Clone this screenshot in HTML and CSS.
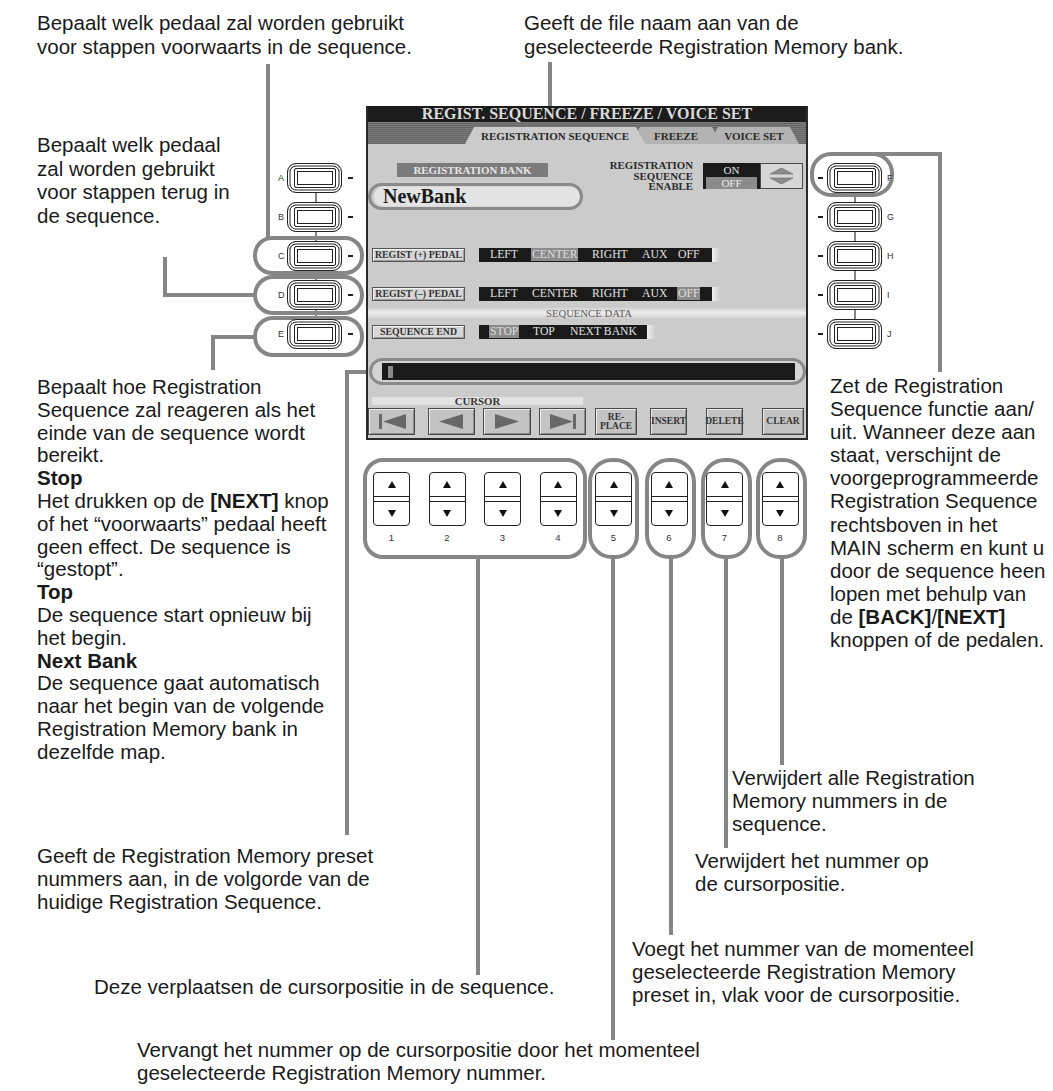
FILE: index.html
```html
<!DOCTYPE html>
<html lang="nl">
<head>
<meta charset="utf-8">
<title>Regist. Sequence / Freeze / Voice Set</title>
<link rel="stylesheet" href="styles.css">
</head>
<body>
<div class="canvas">
  <svg class="leaders" width="1053" height="1091" viewBox="0 0 1053 1091">
    <g class="conn">
      <line x1="316" y1="178" x2="316" y2="334"/>
      <line x1="855" y1="178" x2="855" y2="334"/>
    </g>
    <g class="hl">
      <path d="M268 64 V240"/>
      <path d="M550 62 V184"/>
      <rect x="255" y="238" width="107" height="35" rx="17"/>
      <rect x="255" y="277" width="107" height="36" rx="18"/>
      <rect x="255" y="318" width="107" height="37" rx="18"/>
      <path d="M165 257 V295 H255"/>
      <path d="M213 370 V337 H255"/>
      <path d="M347 835 V372 H369"/>
      <rect x="812" y="154" width="80" height="41" rx="19"/>
      <path d="M870 154 H940 V372"/>
      <rect x="365" y="460" width="220" height="97" rx="18"/>
      <rect x="590" y="460" width="47" height="97" rx="22"/>
      <rect x="647" y="460" width="47" height="97" rx="22"/>
      <rect x="703" y="460" width="47" height="97" rx="22"/>
      <rect x="758" y="460" width="47" height="97" rx="22"/>
      <path d="M478 557 V975"/>
      <path d="M613 557 V1040"/>
      <path d="M671 557 V935"/>
      <path d="M726 557 V848"/>
      <path d="M782 557 V765"/>
    </g>
  </svg>

  <p class="note n1">Bepaalt welk pedaal zal worden gebruikt<br>voor stappen voorwaarts in de sequence.</p>
  <p class="note n2">Geeft de file naam aan van de<br>geselecteerde Registration Memory bank.</p>
  <p class="note n3">Bepaalt welk pedaal<br>zal worden gebruikt<br>voor stappen terug in<br>de sequence.</p>
  <p class="note n4">Bepaalt hoe Registration<br>Sequence zal reageren als het<br>einde van de sequence wordt<br>bereikt.<br><b>Stop</b><br>Het drukken op de <b>[NEXT]</b> knop<br>of het “voorwaarts” pedaal heeft<br>geen effect. De sequence is<br>“gestopt”.<br><b>Top</b><br>De sequence start opnieuw bij<br>het begin.<br><b>Next Bank</b><br>De sequence gaat automatisch<br>naar het begin van de volgende<br>Registration Memory bank in<br>dezelfde map.</p>
  <p class="note n5">Zet de Registration<br>Sequence functie aan/<br>uit. Wanneer deze aan<br>staat, verschijnt de<br>voorgeprogrammeerde<br>Registration Sequence<br>rechtsboven in het<br>MAIN scherm en kunt u<br>door de sequence heen<br>lopen met behulp van<br>de <b>[BACK]</b>/<b>[NEXT]</b><br>knoppen of de pedalen.</p>
  <p class="note n6">Verwijdert alle Registration<br>Memory nummers in de<br>sequence.</p>
  <p class="note n7">Verwijdert het nummer op<br>de cursorpositie.</p>
  <p class="note n8">Geeft de Registration Memory preset<br>nummers aan, in de volgorde van de<br>huidige Registration Sequence.</p>
  <p class="note n9">Voegt het nummer van de momenteel<br>geselecteerde Registration Memory<br>preset in, vlak voor de cursorpositie.</p>
  <p class="note n10">Deze verplaatsen de cursorpositie in de sequence.</p>
  <p class="note n11">Vervangt het nummer op de cursorpositie door het momenteel<br>geselecteerde Registration Memory nummer.</p>

  <div class="keys keys-left">
    <div class="key"><span class="kl">A</span><span class="kb"><span class="kbi"></span></span><span class="kd"></span></div>
    <div class="key"><span class="kl">B</span><span class="kb"><span class="kbi"></span></span><span class="kd"></span></div>
    <div class="key"><span class="kl">C</span><span class="kb"><span class="kbi"></span></span><span class="kd"></span></div>
    <div class="key"><span class="kl">D</span><span class="kb"><span class="kbi"></span></span><span class="kd"></span></div>
    <div class="key"><span class="kl">E</span><span class="kb"><span class="kbi"></span></span><span class="kd"></span></div>
  </div>
  <div class="keys keys-right">
    <div class="key"><span class="kd"></span><span class="kb"><span class="kbi"></span></span><span class="kl">F</span></div>
    <div class="key"><span class="kd"></span><span class="kb"><span class="kbi"></span></span><span class="kl">G</span></div>
    <div class="key"><span class="kd"></span><span class="kb"><span class="kbi"></span></span><span class="kl">H</span></div>
    <div class="key"><span class="kd"></span><span class="kb"><span class="kbi"></span></span><span class="kl">I</span></div>
    <div class="key"><span class="kd"></span><span class="kb"><span class="kbi"></span></span><span class="kl">J</span></div>
  </div>

  <div class="lcd">
    <div class="lcd-title">REGIST. SEQUENCE / FREEZE / VOICE SET</div>
    <div class="lcd-tabs">
      <span class="tab tab-active">REGISTRATION SEQUENCE</span>
      <span class="tab tab-freeze">FREEZE</span>
      <span class="tab tab-voice">VOICE SET</span>
    </div>
    <div class="bank-row">
      <div class="bank-col">
        <div class="bank-label">REGISTRATION BANK</div>
        <div class="bank-name">NewBank</div>
      </div>
      <div class="enable-label">REGISTRATION<br>SEQUENCE<br>ENABLE</div>
      <div class="onoff"><span class="on">ON</span><span class="off">OFF</span></div>
      <div class="updown">
        <svg width="41" height="24" viewBox="0 0 41 24"><polygon points="9,10 32,10 20.5,4" /><polygon points="9,14 32,14 20.5,20" /></svg>
      </div>
    </div>

    <div class="param row-plus">
      <div class="plabel">REGIST (+) PEDAL</div>
      <div class="pbar pedal"><span>LEFT</span><span><b class="sel">CENTER</b></span><span>RIGHT</span><span>AUX</span><span>OFF</span></div>
      <div class="ptail"></div>
    </div>
    <div class="param row-minus">
      <div class="plabel">REGIST (–) PEDAL</div>
      <div class="pbar pedal"><span>LEFT</span><span>CENTER</span><span>RIGHT</span><span>AUX</span><span><b class="sel">OFF</b></span></div>
      <div class="ptail"></div>
    </div>
    <div class="divider">SEQUENCE DATA</div>
    <div class="param row-end">
      <div class="plabel">SEQUENCE END</div>
      <div class="pbar seqend"><span><b class="sel">STOP</b></span><span>TOP</span><span>NEXT BANK</span></div>
      <div class="ptail"></div>
    </div>

    <div class="strip"><div class="strip-bar"><span class="strip-cur"></span></div></div>
    <div class="cursor-label">CURSOR</div>
    <div class="lcd-buttons">
      <div class="lbtn b-first"><svg width="45" height="25" viewBox="0 0 45 25"><rect x="10" y="5" width="3" height="15"/><polygon points="14,12.5 37,5 37,20"/></svg></div>
      <div class="lbtn b-prev"><svg width="45" height="25" viewBox="0 0 45 25"><polygon points="10,12.5 34,5 34,20"/></svg></div>
      <div class="lbtn b-next"><svg width="46" height="25" viewBox="0 0 46 25"><polygon points="11,5 11,20 35,12.5"/></svg></div>
      <div class="lbtn b-last"><svg width="45" height="25" viewBox="0 0 45 25"><polygon points="10,5 10,20 33,12.5"/><rect x="33" y="5" width="3" height="15"/></svg></div>
      <div class="lbtn b-replace txt">RE-<br>PLACE</div>
      <div class="lbtn b-insert txt">INSERT</div>
      <div class="lbtn b-delete txt">DELETE</div>
      <div class="lbtn b-clear txt">CLEAR</div>
    </div>
  </div>

  <div class="dials">
    <div class="dial-wrap"><div class="dial"><div class="up"><svg width="8" height="7" viewBox="0 0 8 7"><polygon points="0,7 8,7 4,0"/></svg></div><div class="down"><svg width="8" height="7" viewBox="0 0 8 7"><polygon points="0,0 8,0 4,7"/></svg></div></div><span class="num">1</span></div>
    <div class="dial-wrap"><div class="dial"><div class="up"><svg width="8" height="7" viewBox="0 0 8 7"><polygon points="0,7 8,7 4,0"/></svg></div><div class="down"><svg width="8" height="7" viewBox="0 0 8 7"><polygon points="0,0 8,0 4,7"/></svg></div></div><span class="num">2</span></div>
    <div class="dial-wrap"><div class="dial"><div class="up"><svg width="8" height="7" viewBox="0 0 8 7"><polygon points="0,7 8,7 4,0"/></svg></div><div class="down"><svg width="8" height="7" viewBox="0 0 8 7"><polygon points="0,0 8,0 4,7"/></svg></div></div><span class="num">3</span></div>
    <div class="dial-wrap"><div class="dial"><div class="up"><svg width="8" height="7" viewBox="0 0 8 7"><polygon points="0,7 8,7 4,0"/></svg></div><div class="down"><svg width="8" height="7" viewBox="0 0 8 7"><polygon points="0,0 8,0 4,7"/></svg></div></div><span class="num">4</span></div>
    <div class="dial-wrap"><div class="dial"><div class="up"><svg width="8" height="7" viewBox="0 0 8 7"><polygon points="0,7 8,7 4,0"/></svg></div><div class="down"><svg width="8" height="7" viewBox="0 0 8 7"><polygon points="0,0 8,0 4,7"/></svg></div></div><span class="num">5</span></div>
    <div class="dial-wrap"><div class="dial"><div class="up"><svg width="8" height="7" viewBox="0 0 8 7"><polygon points="0,7 8,7 4,0"/></svg></div><div class="down"><svg width="8" height="7" viewBox="0 0 8 7"><polygon points="0,0 8,0 4,7"/></svg></div></div><span class="num">6</span></div>
    <div class="dial-wrap"><div class="dial"><div class="up"><svg width="8" height="7" viewBox="0 0 8 7"><polygon points="0,7 8,7 4,0"/></svg></div><div class="down"><svg width="8" height="7" viewBox="0 0 8 7"><polygon points="0,0 8,0 4,7"/></svg></div></div><span class="num">7</span></div>
    <div class="dial-wrap"><div class="dial"><div class="up"><svg width="8" height="7" viewBox="0 0 8 7"><polygon points="0,7 8,7 4,0"/></svg></div><div class="down"><svg width="8" height="7" viewBox="0 0 8 7"><polygon points="0,0 8,0 4,7"/></svg></div></div><span class="num">8</span></div>
  </div>
</div>
</body>
</html>
```

FILE: styles.css
```css
* { box-sizing: border-box; }
html, body { margin: 0; padding: 0; background: #fff; }
body { font-family: "Liberation Sans", Arial, sans-serif; color: #1a1a1a; }

.canvas { position: relative; width: 1053px; height: 1091px; overflow: hidden; }

/* leader lines and highlight outlines */
.leaders { position: absolute; left: 0; top: 0; }
.leaders .hl { fill: none; stroke: #868686; stroke-width: 4; }
.leaders .conn { stroke: #333; stroke-width: 1.2; }

/* callout texts */
.note { position: absolute; margin: 0; font-size: 20.5px; line-height: 23px; white-space: nowrap; color: #1a1a1a; }
.note b { font-weight: bold; }
.n1 { left: 37px; top: 11px; line-height: 24px; }
.n2 { left: 524px; top: 11px; line-height: 24px; }
.n3 { left: 37px; top: 133px; line-height: 23.7px; }
.n4 { left: 37px; top: 376px; line-height: 22.8px; }
.n5 { left: 830px; top: 374px; line-height: 23.1px; }
.n6 { left: 732px; top: 766px; }
.n7 { left: 695px; top: 849px; }
.n8 { left: 37px; top: 844px; }
.n9 { left: 632px; top: 937px; }
.n10 { left: 94px; top: 975px; }
.n11 { left: 137px; top: 1038px; }

/* soft keys A-J */
.keys { position: absolute; display: flex; flex-direction: column; gap: 9px; }
.keys-left { left: 276px; top: 163px; }
.keys-right { left: 818px; top: 163px; }
.key { display: flex; align-items: center; height: 30px; }
.kl { font-size: 9px; color: #333; line-height: 10px; }
.keys-left .kl { width: 11px; padding-left: 2px; }
.keys-right .kl { margin-left: 5px; }
.kb {
  width: 55px; height: 30px; border: 1.5px solid #222; border-radius: 9px; background: #fff;
  display: flex; align-items: center; justify-content: center;
  box-shadow: inset 0 0 0 1.5px #fff, inset 0 0 0 2.5px #222;
}
.kbi {
  width: 42px; height: 20px; border: 1.5px solid #222; border-radius: 2px; background: #fff;
  box-shadow: inset 0 0 0 2px #fff, inset 0 0 0 3px #222;
}
.kd { width: 5px; height: 2px; background: #222; }
.keys-left .kd { margin-left: 6px; }
.keys-right .kd { margin-right: 4px; }

/* LCD screen */
.lcd {
  position: absolute; left: 366px; top: 106px; width: 442px; height: 334px;
  background: #cbcbcb; border: 2px solid #2a2a2a; border-top: 0;
  font-family: "Liberation Serif", "Times New Roman", serif;
}
.lcd-title {
  height: 16px; background: #1c1c1c; color: #dadada; font-weight: bold; font-size: 16px;
  line-height: 16px; text-align: center; white-space: nowrap;
}
.lcd-tabs {
  height: 22px; display: flex; align-items: flex-end; padding-left: 97px;
  background: repeating-linear-gradient(to bottom, #7c7c7c 0 1px, #646464 1px 2px);
}
.tab {
  height: 17px; display: flex; align-items: center; justify-content: center;
  font-weight: bold; font-size: 11px; color: #2a2a2a; white-space: nowrap;
  clip-path: polygon(9px 0, calc(100% - 9px) 0, 100% 100%, 0 100%);
}
.tab-active { width: 180px; background: #cbcbcb; position: relative; z-index: 3; }
.tab-freeze { width: 90px; margin-left: -14px; background: #b3b3b3; position: relative; z-index: 2; }
.tab-voice { width: 90px; margin-left: -12px; background: #b3b3b3; position: relative; z-index: 1; }

.bank-row { display: flex; align-items: flex-start; margin-top: 16px; }
.bank-col { width: 215px; }
.bank-label {
  margin: 3px 0 0 29px; width: 151px; height: 14px; background: #7b7b7b; color: #e6e6e6;
  font-weight: bold; font-size: 10.9px; line-height: 14px; text-align: center; white-space: nowrap;
}
.bank-name {
  margin-top: 6px; height: 27px; border: 3px solid #8a8a8a; border-radius: 14px;
  background: #e4e4e4; padding-left: 12px; font-weight: bold; font-size: 20px; line-height: 21px; color: #1a1a1a;
  box-shadow: inset 2px 0 2px #b9b9b9;
}
.enable-label {
  width: 110px; text-align: right; font-weight: bold; font-size: 10.8px; line-height: 10.5px; color: #2a2a2a;
}
.onoff {
  margin: 3px 0 0 10px; width: 57px; height: 26px; background: #1a1a1a; color: #e2e2e2;
  display: flex; flex-direction: column; align-items: center; padding-top: 1px; font-size: 11px; line-height: 12px;
}
.onoff .off { width: 51px; background: #8b8b8b; text-align: center; margin-top: 1px; color: #ececec; }
.updown {
  margin-top: 3px; width: 43px; height: 26px; background: #d6d6d6; border: 1px solid #4a4a4a;
}
.updown polygon { fill: #8a8a8a; stroke: #6a6a6a; stroke-width: 0.6; }

.param { display: flex; height: 14px; }
.row-plus { margin-top: 38px; }
.row-minus { margin-top: 25px; }
.row-end { margin-top: 5px; }
.plabel {
  margin-left: 4px; width: 93px; height: 14px; border: 1px solid #555; background: #d7d7d7;
  box-shadow: inset 1px 1px 0 #f4f4f4, inset -1px -1px 0 #9a9a9a;
  font-weight: bold; font-size: 9.8px; line-height: 12px; text-align: center; color: #333; white-space: nowrap;
}
.pbar {
  margin-left: 14px; height: 14px; background: #1a1a1a; color: #e0e0e0; font-size: 11.7px; line-height: 14px;
  display: grid; padding-left: 11px; white-space: nowrap;
}
.pedal { width: 233px; grid-template-columns: 42px 60px 50px 36px auto; }
.seqend { width: 168px; grid-template-columns: 43px 37px auto; }
.sel { font-weight: normal; background: #8b8b8b; color: #dedede; padding: 0 1px; margin-left: -1px; }
.ptail { width: 8px; height: 14px; background: linear-gradient(to right, #f2f2f2, #cdcdcd); }

.divider {
  margin-top: 5px; height: 14px; text-align: center; font-size: 10.7px; line-height: 14px; color: #5e5e5e;
  background: linear-gradient(to bottom, #c6c6c6, #ededed 50%, #c6c6c6);
  padding-left: 4px;
}

.strip {
  margin: 19px 0 0 1px; width: 437px; height: 27px; border: 3px solid #8a8a8a; border-radius: 14px;
  background: #d4d4d4; padding: 2px 8px 2px 10px;
}
.strip-bar { height: 17px; background: #1a1a1a; display: flex; align-items: center; padding-left: 6px; }
.strip-cur { width: 5px; height: 12px; background: #8a8a8a; }

.cursor-label {
  margin: 12px 0 0 4px; width: 211px; height: 8px; background: #e3e3e3; text-align: center;
  font-weight: bold; font-size: 10.8px; line-height: 9px; color: #333; overflow: visible;
}

.lcd-buttons { display: flex; margin-top: 3px; height: 27px; }
.lbtn {
  height: 27px; border: 1px solid #4a4a4a; background: #c3c3c3;
  box-shadow: inset 1px 1px 0 #ececec, inset -1px -1px 0 #8a8a8a;
  display: flex; align-items: center; justify-content: center;
}
.lbtn svg { fill: #686868; display: block; }
.lbtn.txt { font-weight: bold; font-size: 9.5px; line-height: 9px; color: #333; text-align: center; white-space: nowrap; }
.b-first { width: 47px; }
.b-prev { width: 47px; margin-left: 13px; }
.b-next { width: 48px; margin-left: 8px; }
.b-last { width: 47px; margin-left: 8px; }
.b-replace { width: 42px; margin-left: 9px; }
.b-insert { width: 37px; margin-left: 13px; }
.b-delete { width: 37px; margin-left: 19px; }
.b-clear { width: 42px; margin-left: 19px; font-size: 10.5px; }

/* data dials 1-8 */
.dials { position: absolute; left: 373px; top: 472px; display: flex; gap: 18.5px; }
.dial-wrap { width: 37px; display: flex; flex-direction: column; align-items: center; }
.dial {
  width: 37px; height: 54px; border: 1.5px solid #222; border-radius: 4px; background: #fff;
  display: flex; flex-direction: column; justify-content: space-between;
}
.dial .up, .dial .down { display: flex; align-items: center; justify-content: center; }
.dial .up { height: 24px; border-bottom: 1.5px solid #222; }
.dial .down { height: 24px; border-top: 1.5px solid #222; }
.dial svg { fill: #111; display: block; }
.num { margin-top: 6px; font-size: 9.5px; line-height: 11px; color: #333; }
```
